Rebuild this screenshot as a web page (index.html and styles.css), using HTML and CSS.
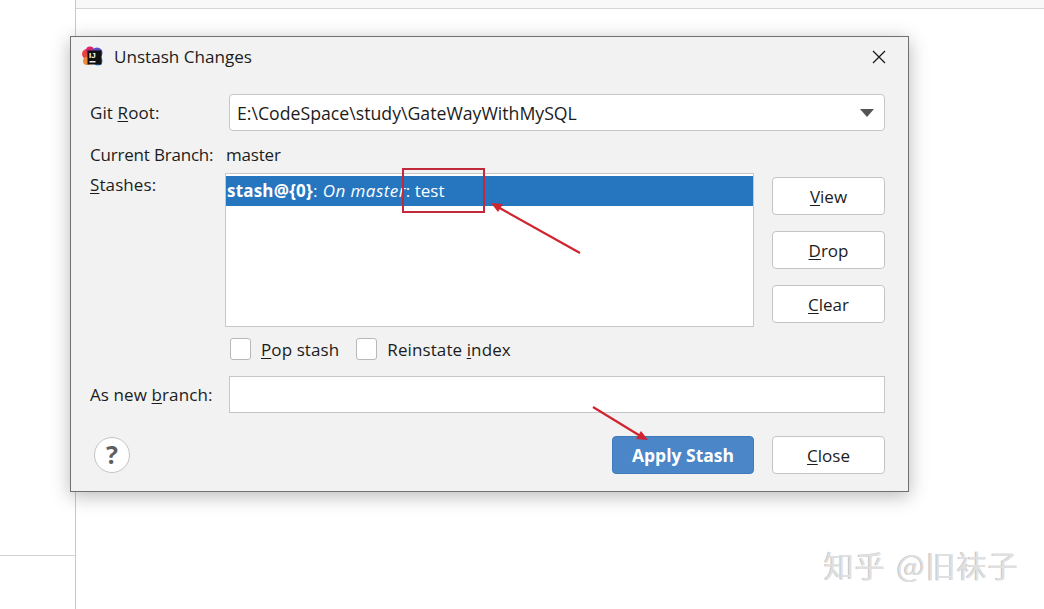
FILE: index.html
```html
<!DOCTYPE html>
<html lang="en">
  <head>
    <meta charset="UTF-8" />
    <title>Unstash Changes</title>
    <link rel="stylesheet" href="styles.css">
  </head>
  <body>
    <div class="app">
      <div class="side"><div class="sideLine"></div></div>
      <div class="main"><div class="topBar"></div></div>
    </div>

    <div class="dialog">
      <div class="title">
        <svg class="logo" width="22" height="22" viewBox="0 0 22 22">
          <circle cx="6" cy="8" r="5" fill="#e8433f"/>
          <circle cx="9" cy="4.500" r="4" fill="#d6246e"/>
          <circle cx="16" cy="7" r="5.500" fill="#5a4fc0"/>
          <circle cx="17" cy="15" r="4.500" fill="#3b7fd6"/>
          <circle cx="6" cy="15" r="4" fill="#f08a3c"/>
          <rect x="6.500" y="4.500" width="14" height="14" fill="#111"/>
          <rect x="8.500" y="15" width="6" height="1.500" fill="#eee"/>
          <text x="8" y="12" class="logoText">IJ</text>
        </svg>
        <span class="titleText">Unstash Changes</span>
        <svg class="closeIcon" width="14" height="14" viewBox="0 0 14 14">
          <path d="M1 1 L13 13 M13 1 L1 13" stroke="#1a1a1a" stroke-width="1.300" fill="none"/>
        </svg>
      </div>

      <div class="form">
        <div class="row">
          <label class="label">Git <u>R</u>oot:</label>
          <div class="combo">
            <span>E:\CodeSpace\study\GateWayWithMySQL</span>
            <span class="arrowDown"></span>
          </div>
        </div>

        <div class="row branchRow">
          <label class="label short">Current Branch:</label>
          <span>master</span>
        </div>

        <div class="row stashRow">
          <label class="label shorter"><u>S</u>tashes:</label>
          <div class="list">
            <div class="listItem"><b>stash@{0}</b>: <i>On master</i>: test</div>
          </div>
          <div class="sideBtns">
            <button class="btn"><u>V</u>iew</button>
            <button class="btn"><u>D</u>rop</button>
            <button class="btn"><u>C</u>lear</button>
          </div>
        </div>

        <div class="checks">
          <span class="box"></span>
          <span class="checkText"><u>P</u>op stash</span>
          <span class="box"></span>
          <span class="checkText">Reinstate <u>i</u>ndex</span>
        </div>

        <div class="row newRow">
          <label class="label">As new <u>b</u>ranch:</label>
          <div class="input"></div>
        </div>

        <div class="footer">
          <div class="help">?</div>
          <div class="footBtns">
            <button class="btn apply">Apply Stash</button>
            <button class="btn"><u>C</u>lose</button>
          </div>
        </div>
      </div>
    </div>

    <!-- red marks drawn on top of the screenshot -->
    <div class="redBox"></div>
    <svg class="marks" width="1044" height="609" viewBox="0 0 1044 609">
      <path d="M580 253 L496 206" stroke="#d0242f" stroke-width="2.200" fill="none"/>
      <path d="M491 203 L503 204 L498 212 Z" fill="#d0242f"/>
      <path d="M593 407 L642 437" stroke="#d0242f" stroke-width="2.200" fill="none"/>
      <path d="M648 440 L636 439 L641 431 Z" fill="#d0242f"/>
    </svg>

    <div class="mark">知乎 @旧袜子</div>
  </body>
</html>
```

FILE: styles.css
```css
body {
  margin: 0;
  padding: 0;
  width: 1044px;
  height: 609px;
  overflow: hidden;
  background: #fff;
  font-family: "Open Sans", "Liberation Sans", sans-serif;
  font-size: 17px;
  color: #1c1c1c;
}
u {
  text-underline-offset: 2px;
  text-decoration-thickness: 1px;
}
.app {
  display: flex;
  height: 609px;
}
.side {
  width: 75px;
  border-right: 1px solid #c9c9c9;
  padding-top: 555px;
  box-sizing: content-box;
}
.sideLine {
  border-top: 1px solid #d2d2d2;
}
.main {
  flex: 1;
}
.topBar {
  height: 8px;
  background: #f8f8f8;
  border-bottom: 1px solid #d4d4d4;
}
.dialog {
  position: absolute;
  left: 70px;
  top: 36px;
  width: 839px;
  height: 456px;
  box-sizing: border-box;
  background: #f2f2f2;
  border: 1px solid #707070;
  box-shadow: 0 4px 18px rgba(0, 0, 0, 0.28);
}
.title {
  display: flex;
  align-items: center;
  height: 41px;
  padding: 0 22px 2px 10px;
  box-sizing: border-box;
}
.logo {
  margin-right: 11px;
}
.logoText {
  font-family: "Liberation Sans", sans-serif;
  font-size: 8px;
  font-weight: bold;
  fill: #fff;
}
.titleText {
  flex: 1;
  font-size: 17.100px;
}
.form {
  padding: 16px 23px 0 19px;
}
.row {
  display: flex;
  align-items: center;
}
.label {
  width: 139px;
  flex: none;
  letter-spacing: 0.1px;
}
.label.short {
  width: 136px;
}
.label.shorter {
  width: 135px;
}
.combo {
  flex: 1;
  height: 37px;
  box-sizing: border-box;
  display: flex;
  align-items: center;
  justify-content: space-between;
  padding: 0 10px 0 7px;
  background: #fff;
  border: 1px solid #c6c6c6;
  border-radius: 4px;
  font-size: 17.700px;
}
.arrowDown {
  width: 0;
  height: 0;
  border-left: 7px solid transparent;
  border-right: 7px solid transparent;
  border-top: 8px solid #555;
}
.branchRow {
  margin-top: 11px;
  height: 24px;
  letter-spacing: -0.200px;
}
.branchRow .label {
  letter-spacing: -0.200px;
}
.stashRow {
  margin-top: 7px;
  align-items: flex-start;
}
.stashRow .label {
  line-height: 24px;
}
.list {
  width: 529px;
  height: 154px;
  box-sizing: border-box;
  padding-top: 2px;
  background: #fff;
  border: 1px solid #c8c8c8;
}
.listItem {
  height: 30px;
  line-height: 30px;
  padding-left: 1px;
  background: #2675bf;
  color: #fff;
}
.listItem b {
  letter-spacing: 0.200px;
}
.listItem i {
  letter-spacing: 0.450px;
  margin-left: 1px;
}
.sideBtns {
  display: flex;
  flex-direction: column;
  gap: 16px;
  margin-left: 18px;
  padding-top: 4px;
}
.btn {
  width: 113px;
  height: 38px;
  padding: 0;
  box-sizing: border-box;
  background: #fff;
  border: 1px solid #c4c4c4;
  border-radius: 4px;
  font: inherit;
  color: inherit;
}
.checks {
  display: flex;
  align-items: center;
  height: 23px;
  margin: 10px 0 0 140px;
}
.box {
  width: 21px;
  height: 22px;
  box-sizing: border-box;
  background: #fff;
  border: 1px solid #b8b8b8;
  border-radius: 3px;
  margin-right: 10px;
}
.checkText {
  margin-right: 17px;
  padding-top: 1px;
  letter-spacing: 0.100px;
}
.newRow {
  margin-top: 16px;
}
.input {
  flex: 1;
  height: 37px;
  box-sizing: border-box;
  background: #fff;
  border: 1px solid #c6c6c6;
}
.footer {
  display: flex;
  align-items: center;
  justify-content: space-between;
  margin-top: 23px;
  padding-left: 4px;
}
.help {
  width: 36px;
  height: 36px;
  box-sizing: border-box;
  border: 1px solid #c4c4c4;
  border-radius: 50%;
  background: #fff;
  color: #5f5f5f;
  font-size: 25px;
  font-weight: bold;
  line-height: 32px;
  text-align: center;
}
.footBtns {
  display: flex;
  gap: 18px;
}
.apply {
  width: 142px;
  background: #4a86c8;
  border-color: #3f7abb;
  color: #fff;
  font-weight: 700;
  font-size: 17.500px;
}
.redBox {
  position: absolute;
  left: 402px;
  top: 168px;
  width: 83px;
  height: 45px;
  box-sizing: border-box;
  border: 2px solid #c22a3c;
}
.marks {
  position: absolute;
  left: 0;
  top: 0;
}
.mark {
  position: absolute;
  left: 824px;
  top: 544px;
  font-family: "Noto Sans CJK SC", "Noto Sans", sans-serif;
  font-size: 30px;
  letter-spacing: 1px;
  word-spacing: 3px;
  line-height: 40px;
  color: #e0e0e0;
  text-shadow: -1px 0 0 #c4c4c4;
  white-space: nowrap;
}
```
